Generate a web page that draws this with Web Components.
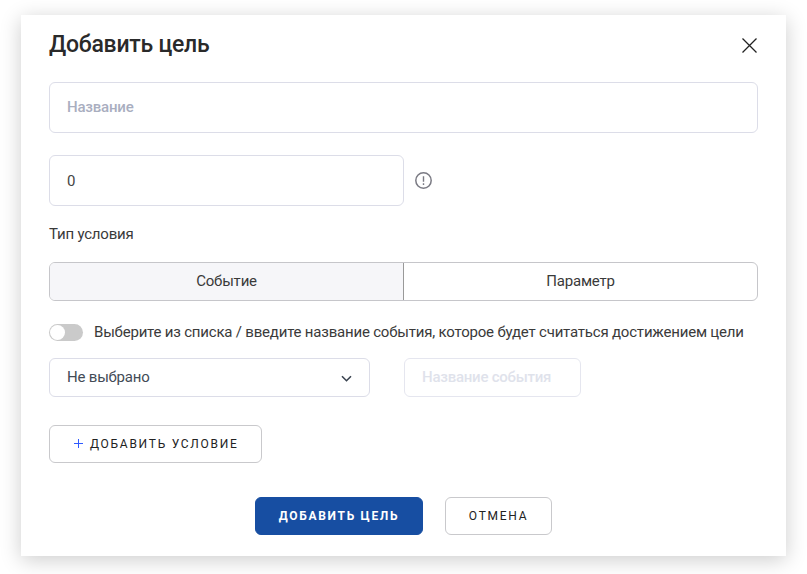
<!DOCTYPE html>
<html lang="ru">
<head>
<meta charset="utf-8">
<title>Добавить цель</title>
<style>
html { height: 100%; }
body { margin: 0; box-sizing: border-box; height: 100%; padding: 15px 0 0 21px; background: #fff; font-family: Roboto, "Liberation Sans", sans-serif; font-size: 15px; color: #3a3a3a; letter-spacing: -0.2px; }
</style>
</head>
<body>
<goal-dialog></goal-dialog>
<script>
const define = (name, html) => customElements.define(name, class extends HTMLElement {
  constructor() {
    super();
    const t = document.createElement('template');
    t.innerHTML = html;
    this.attachShadow({ mode: 'open' }).append(t.content.cloneNode(true));
  }
});

define('close-icon', `
<style>:host{display:block;width:16px;height:16px}svg{display:block}</style>
<svg width="16" height="16" viewBox="0 0 16 16" fill="none" stroke="#222" stroke-width="1.3"><path d="M.5 1.5L14.5 15.5M14.5 1.5L.5 15.5"/></svg>`);

define('hint-icon', `
<style>:host{display:block;width:18px;height:18px}svg{display:block}</style>
<svg width="18" height="18" viewBox="0 0 18 18" fill="none" stroke="#7b7b84" stroke-width="1.5"><circle cx="8.5" cy="8.5" r="7.7"/><path d="M8.5 4.2v5.6M8.5 11.3v1.6" stroke-width="1.4"/></svg>`);

define('text-field', `
<style>
:host{display:flex;box-sizing:border-box;align-items:center;height:51px;padding:0 17px 1px;border:1px solid #dcdde8;border-radius:6px;background:#fff;color:#444}
:host([placeholder]){color:#a9aebf;font-weight:500}
:host([compact]){height:39px}
:host([disabled]){opacity:.62;color:#cdd1df;border-color:#d6d8e6;letter-spacing:-.25px}
</style><slot></slot>`);

define('select-field', `
<style>
:host{display:flex;box-sizing:border-box;align-items:center;justify-content:space-between;height:39px;padding:0 17px 1px;border:1px solid #dcdde8;border-radius:6px;color:#434b56}
svg{display:block;margin-top:4px}
</style><slot></slot>
<svg width="11" height="8" viewBox="0 0 11 8" fill="none" stroke="#39434f" stroke-width="1.6"><path d="M1 1.2L5.5 5.7L10 1.2"/></svg>`);

define('segment-switch', `
<style>
:host{display:grid;grid-template-columns:354px 1fr;box-sizing:border-box;height:39px;border:1px solid #c6c6ca;border-radius:6px;overflow:hidden}
.seg{display:flex;box-sizing:border-box;align-items:center;justify-content:center;padding-bottom:1px}
.on{background:#f6f6f9;border-right:1px solid #999}
</style><div class="seg on"><slot name="first"></slot></div><div class="seg"><slot name="second"></slot></div>`);

define('toggle-switch', `
<style>
:host{display:flex;flex:none;box-sizing:border-box;width:34px;height:17px;padding:1px;border-radius:9px;background:#cacaca}
span{width:15px;height:15px;border-radius:50%;background:#fff}
</style><span></span>`);

define('push-button', `
<style>
:host{display:flex;box-sizing:border-box;align-items:center;justify-content:center;height:38px;border:1px solid #c9c9cc;border-radius:6px;color:#222;font-size:12px;letter-spacing:1.72px;padding:0 0 1px;white-space:nowrap}
:host([primary]){background:#174ea2;border-color:#174ea2;color:#fff;font-weight:700;letter-spacing:1.7px}
</style><slot></slot>`);

define('plus-icon', `
<style>:host{display:block;width:9px;height:9px;margin-right:7px}svg{display:block}</style>
<svg width="9" height="9" viewBox="0 0 9 9" fill="#2f5bff"><path d="M4 0h1v9h-1zM0 4h9v1h-9z"/></svg>`);

define('goal-dialog', `
<style>
:host{display:flex;flex-direction:column;box-sizing:border-box;width:765px;height:541px;padding:0 28px;background:#fff;box-shadow:0 4px 20px rgba(0,0,0,.2)}
header{display:flex;justify-content:space-between;align-items:center;height:60px;margin-bottom:7px}
h1{margin:0;font-size:23px;font-weight:500;line-height:28px;letter-spacing:-.25px;color:#2a2a2a}
.row{display:flex;align-items:center;white-space:nowrap}
.value{margin-top:22px;gap:11px}
.value text-field{width:355px;padding-bottom:0}
.label{margin:18px 0;line-height:20px}
.toggle{margin-top:21px;height:20px;gap:11px}
.event{margin-top:16px;gap:34px}
.event select-field{width:321px}
.event text-field{width:177px}
.add{width:213px;margin-top:28px;justify-content:flex-start;padding-left:24px}
.actions{justify-content:center;gap:22px;margin-top:34px}
</style>
<header><h1>Добавить цель</h1><close-icon></close-icon></header>
<text-field placeholder>Название</text-field>
<div class="row value"><text-field>0</text-field><hint-icon></hint-icon></div>
<div class="label">Тип условия</div>
<segment-switch><span slot="first">Событие</span><span slot="second">Параметр</span></segment-switch>
<div class="row toggle"><toggle-switch></toggle-switch><span>Выберите из списка / введите название события, которое будет считаться достижением цели</span></div>
<div class="row event"><select-field>Не выбрано</select-field><text-field placeholder compact disabled>Название события</text-field></div>
<push-button class="add"><plus-icon></plus-icon>ДОБАВИТЬ УСЛОВИЕ</push-button>
<div class="row actions"><push-button primary style="width:168px">ДОБАВИТЬ ЦЕЛЬ</push-button><push-button style="width:107px">ОТМЕНА</push-button></div>`);
</script>
</body>
</html>
